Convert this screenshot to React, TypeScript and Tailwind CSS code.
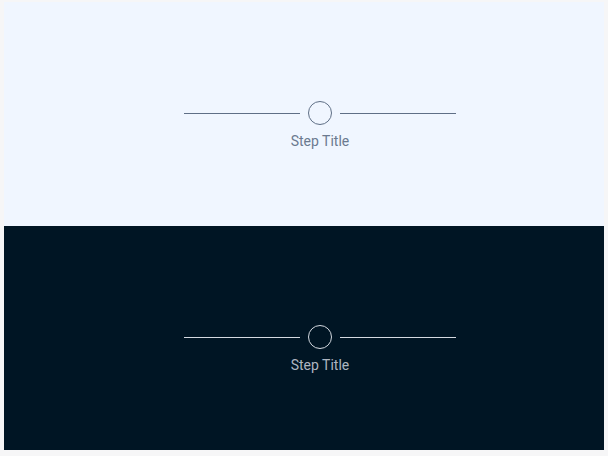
const Step = ({ dark }: { dark?: boolean }) => {
  const line = dark ? "bg-[#d4d9e0]" : "bg-[#5f6f86]";
  return (
    <div className="flex flex-col items-center">
      <div className="flex items-center gap-2">
        <div className={`h-px w-[116px] ${line}`} />
        <div
          className={`h-6 w-6 rounded-full border ${
            dark ? "border-[#d4d9e0]" : "border-[#5f6f86]"
          }`}
        />
        <div className={`h-px w-[116px] ${line}`} />
      </div>
      <span
        className={`mt-[6px] text-[14px] leading-5 ${
          dark ? "text-[#aeb6c1]" : "text-[#6b7a90]"
        }`}
      >
        Step Title
      </span>
    </div>
  );
};

const App = () => {
  return (
    <div
      className="h-[456px] w-[608px] bg-[#f6f6f7] pl-1 pt-0.5"
      style={{ fontFamily: "Roboto, 'Noto Sans', sans-serif" }}
    >
      <div className="flex w-[600px] flex-col">
        <div className="flex h-[224px] items-center justify-center bg-[#f0f6ff] pl-8 pt-[24px]">
          <Step />
        </div>
        <div className="flex h-[224px] items-center justify-center bg-[#001524] pl-8 pt-[24px]">
          <Step dark />
        </div>
      </div>
    </div>
  );
};

export default App;
